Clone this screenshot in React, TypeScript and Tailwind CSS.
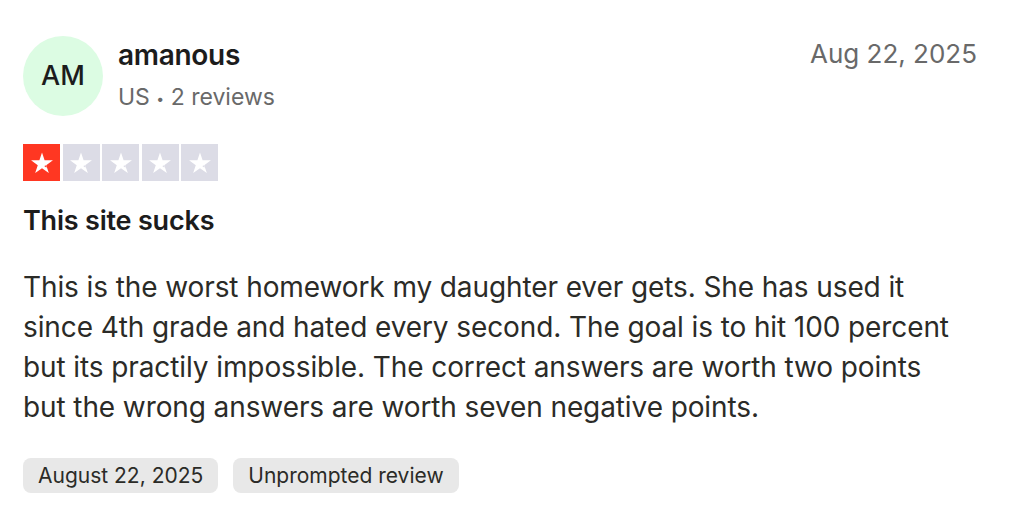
import React from "react";

const Star = ({ active }: { active: boolean }) => (
  <div className={`w-[37px] h-[37px] flex items-center justify-center ${active ? "bg-[#ff3722]" : "bg-[#dcdce6]"}`}>
    <svg width="26" height="26" viewBox="0 0 24 24">
      <path
        d="M12 2.2l2.4 7.3h7.7l-6.2 4.5 2.4 7.3L12 16.8l-6.3 4.5L8.1 14 1.9 9.5h7.7z"
        fill="#ffffff"
      />
      <path d="M14.6 14.6l1.6 1.2" stroke={active ? "#ff3722" : "#dcdce6"} strokeWidth="1.1" />
    </svg>
  </div>
);

export default function App() {
  return (
    <div className="w-[1024px] h-[521px] bg-white pl-[23px] pr-[47px] pt-[36px] text-[#1c1c1c] font-['Inter',sans-serif]">
      <div className="flex items-start">
        <div className="w-[80px] h-[80px] rounded-full bg-[#dcfce3] flex items-center justify-center text-[27px] font-medium text-[#1c1c1c] shrink-0">
          AM
        </div>
        <div className="ml-[15px] flex flex-col">
          <div className="text-[28px] font-semibold leading-[36px] mt-[1px] tracking-[-0.3px]">amanous</div>
          <div className="text-[23px] leading-[30px] text-[#696969] mt-[9px]">
            US <span className="text-[14px] align-middle">•</span> 2 reviews
          </div>
        </div>
        <div className="ml-auto text-[26px] leading-[34px] text-[#696969] mt-[1px]">Aug 22, 2025</div>
      </div>

      <div className="flex gap-[2.5px] mt-[28px]">
        <Star active />
        <Star active={false} />
        <Star active={false} />
        <Star active={false} />
        <Star active={false} />
      </div>

      <h2 className="text-[27px] font-semibold leading-[36px] mt-[22px] tracking-[-0.2px]">This site sucks</h2>

      <p className="text-[28px] leading-[40px] mt-[28px] text-[#2b2b27] tracking-[-0.1px]">
        This is the worst homework my daughter ever gets. She has used it<br />
        since 4th grade and hated every second. The goal is to hit 100 percent<br />
        but its practily impossible. The correct answers are worth two points<br />
        but the wrong answers are worth seven negative points.
      </p>

      <div className="flex gap-[15px] mt-[31px]">
        <span className="h-[35px] px-[15px] rounded-[8px] bg-[#e8e8e8] flex items-center text-[21px] text-[#2b2b27]">August 22, 2025</span>
        <span className="h-[35px] px-[15px] rounded-[8px] bg-[#e8e8e8] flex items-center text-[21px] text-[#2b2b27]">Unprompted review</span>
      </div>
    </div>
  );
}
